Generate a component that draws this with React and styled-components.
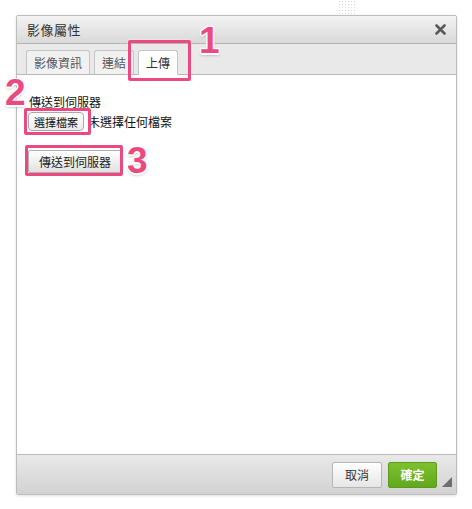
import styled, { createGlobalStyle } from "styled-components";

const GlobalStyle = createGlobalStyle`
  html, body {
    margin: 0;
    padding: 0;
    background: #ffffff;
  }
  body {
    font-family: "Liberation Sans", "Noto Sans CJK TC", sans-serif;
    font-size: 12px;
    color: #222;
  }
`;

const Page = styled.div`
  position: relative;
  width: 472px;
  height: 509px;
  padding: 15px 0 0 16px;
  box-sizing: border-box;
`;

const Dots = styled.div`
  position: absolute;
  left: 338px;
  top: 0;
  width: 17px;
  height: 15px;
  background-image: radial-gradient(#d6d6d6 0.8px, transparent 0.9px);
  background-size: 3px 3px;
`;

const Dialog = styled.div`
  width: 441px;
  height: 480px;
  border: 1px solid #bdbdbd;
  border-radius: 2px;
  box-sizing: border-box;
  display: flex;
  flex-direction: column;
  box-shadow: 0 1px 3px rgba(0, 0, 0, 0.12);
  overflow: hidden;
`;

const TitleBar = styled.div`
  height: 27px;
  border-bottom: 1px solid #b4b4b4;
  background: linear-gradient(#f3f3f3, #d9d9d9);
  display: flex;
  align-items: center;
  justify-content: space-between;
  padding: 0 10px 0 10px;
`;

const Title = styled.span`
  font-size: 13px;
  color: #333;
  letter-spacing: 0.5px;
`;

const Close = styled.svg`
  width: 11px;
  height: 11px;
`;

const TabBar = styled.div`
  height: 30px;
  background: #e9e9e9;
  border-bottom: 1px solid #b8b8b8;
  display: flex;
  align-items: flex-end;
  gap: 4px;
  padding-left: 9px;
`;

const Tab = styled.div`
  height: 25px;
  padding: 0 7px;
  margin-bottom: -1px;
  border: 1px solid #c4c4c4;
  border-bottom: ${(p) => (p.$active ? "1px solid #fff" : "1px solid #b8b8b8")};
  border-radius: 3px 3px 0 0;
  background: ${(p) => (p.$active ? "#ffffff" : "#f1f1f1")};
  color: ${(p) => (p.$active ? "#333" : "#555")};
  font-size: 12px;
  display: flex;
  align-items: center;
  box-sizing: border-box;
`;

const Body = styled.div`
  flex: 1;
  background: #fff;
  padding: 21px 10px 0 11px;
  display: flex;
  flex-direction: column;
  align-items: flex-start;
`;

const Label = styled.div`
  font-size: 12px;
  line-height: 14px;
  color: #111;
  margin-left: 1px;
`;

const FileRow = styled.div`
  display: flex;
  align-items: center;
  gap: 4px;
  margin-top: 2px;
  font-size: 12px;
  color: #111;
`;

const FileButton = styled.div`
  height: 17px;
  padding: 0 5px;
  border: 1px solid #a9a9a9;
  border-radius: 4px;
  background: linear-gradient(#ffffff, #ececec);
  font-size: 11px;
  display: flex;
  align-items: center;
  color: #111;
`;

const UploadButton = styled.div`
  margin-top: 19px;
  height: 23px;
  padding: 0 10px;
  border: 1px solid #b1b1b1;
  border-radius: 2px;
  background: linear-gradient(#ffffff, #e1e1e1);
  font-size: 12px;
  display: flex;
  align-items: center;
  box-sizing: border-box;
  color: #222;
`;

const Footer = styled.div`
  height: 39px;
  border-top: 1px solid #b9b9b9;
  background: linear-gradient(#e9e9e9, #d2d2d2);
  display: flex;
  align-items: center;
  justify-content: flex-end;
  gap: 6px;
  padding-right: 19px;
  position: relative;
`;

const Button = styled.div`
  height: 26px;
  width: ${(p) => (p.$primary ? "49px" : "50px")};
  box-sizing: border-box;
  border-radius: 2px;
  border: 1px solid ${(p) => (p.$primary ? "#5c9a1c" : "#b5b5b5")};
  background: ${(p) =>
    p.$primary
      ? "linear-gradient(#7cc22d, #63a71d)"
      : "linear-gradient(#ffffff, #e6e6e6)"};
  color: ${(p) => (p.$primary ? "#fff" : "#333")};
  font-weight: ${(p) => (p.$primary ? "bold" : "normal")};
  font-size: 12px;
  display: flex;
  align-items: center;
  justify-content: center;
`;

const Grip = styled.div`
  position: absolute;
  right: 4px;
  bottom: 7px;
  width: 0;
  height: 0;
  border-left: 10px solid transparent;
  border-bottom: 10px solid #6e6e6e;
`;

const Mark = styled.div`
  position: absolute;
  border: 3px solid #ea4a80;
  border-radius: 2px;
  box-sizing: border-box;
  box-shadow: 0 0 2px rgba(255, 255, 255, 0.9);
`;

const Num = styled.div`
  position: absolute;
  font-family: "Liberation Sans", sans-serif;
  font-weight: bold;
  font-size: 37px;
  line-height: 1;
  color: #ea4a80;
  text-shadow:
    1.5px 0 0 #fff, -1.5px 0 0 #fff, 0 1.5px 0 #fff, 0 -1.5px 0 #fff,
    1px 1px 0 #fff, -1px -1px 0 #fff, 1px -1px 0 #fff, -1px 1px 0 #fff,
    0 2px 3px rgba(0, 0, 0, 0.35);
`;

export default function App() {
  return (
    <>
      <GlobalStyle />
      <Page>
        <Dots />
        <Dialog>
          <TitleBar>
            <Title>影像屬性</Title>
            <Close viewBox="0 0 11 11">
              <path d="M1.5 1.5 L9.5 9.5 M9.5 1.5 L1.5 9.5" stroke="#5a5a5a" strokeWidth="2.6" strokeLinecap="round" />
            </Close>
          </TitleBar>
          <TabBar>
            <Tab>影像資訊</Tab>
            <Tab>連結</Tab>
            <Tab $active>上傳</Tab>
          </TabBar>
          <Body>
            <Label>傳送到伺服器</Label>
            <FileRow>
              <FileButton>選擇檔案</FileButton>
              <span>未選擇任何檔案</span>
            </FileRow>
            <UploadButton>傳送到伺服器</UploadButton>
          </Body>
          <Footer>
            <Button>取消</Button>
            <Button $primary>確定</Button>
            <Grip />
          </Footer>
        </Dialog>

        <Mark style={{ left: 128, top: 40, width: 63, height: 41 }} />
        <Num style={{ left: 199, top: 22 }}>1</Num>
        <Mark style={{ left: 24, top: 108, width: 67, height: 27 }} />
        <Num style={{ left: 5, top: 74 }}>2</Num>
        <Mark style={{ left: 25, top: 145, width: 98, height: 31 }} />
        <Num style={{ left: 127, top: 142 }}>3</Num>
      </Page>
    </>
  );
}
